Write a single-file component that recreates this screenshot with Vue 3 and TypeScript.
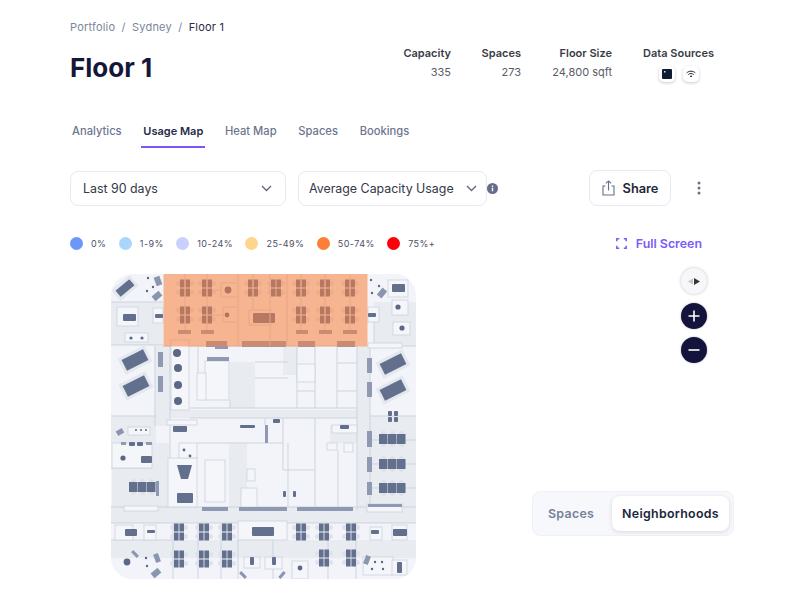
<script setup lang="ts">
type R = [number, number, number, number]
type Rot = [number, number, number, number, number]

const tabs = ['Analytics', 'Usage Map', 'Heat Map', 'Spaces', 'Bookings']
const stats = [
  { label: 'Capacity', value: '335' },
  { label: 'Spaces', value: '273' },
  { label: 'Floor Size', value: '24,800 sqft' },
]
const legend = [
  { label: '0%', color: '#6b96fb' },
  { label: '1-9%', color: '#a9d6fd' },
  { label: '10-24%', color: '#c9d0fb' },
  { label: '25-49%', color: '#fdd58b' },
  { label: '50-74%', color: '#fd7f36' },
  { label: '75%+', color: '#fb0007' },
]

// Darker floor zones
const rooms: R[] = [
  [111, 302, 52, 43], [155, 346, 16, 80], [357, 346, 13, 164], [160, 410, 197, 8],
  [152, 443, 17, 64], [111, 507, 305, 16], [111, 540, 305, 18], [230, 362, 25, 46],
  [374, 302, 42, 44], [370, 416, 46, 91], [112, 468, 46, 39], [283, 347, 14, 28],
  [111, 416, 45, 27], [330, 425, 27, 18], [229, 443, 18, 64],
]
// Light outlined boxes
const boxes: R[] = [
  [117, 307, 21, 19], [125, 333, 23, 9], [153, 308, 10, 15], [171, 340, 18, 70],
  [205, 361, 24, 39], [388, 280, 20, 17], [392, 300, 16, 15], [393, 322, 17, 13],
  [368, 307, 11, 15], [368, 343, 34, 5], [168, 458, 29, 49], [179, 443, 18, 15],
  [205, 460, 20, 42], [247, 469, 8, 12], [241, 488, 16, 19], [124, 506, 34, 5],
  [115, 525, 18, 15], [144, 525, 12, 15], [238, 521, 49, 19], [244, 557, 16, 11],
  [265, 557, 17, 12], [292, 561, 16, 18], [363, 557, 30, 18], [392, 560, 15, 15],
  [370, 527, 12, 13], [392, 525, 15, 15], [367, 504, 35, 8], [167, 420, 30, 5],
  [128, 427, 22, 8], [327, 443, 10, 7], [344, 443, 9, 9], [332, 425, 25, 8],
  [112, 443, 40, 25], [197, 373, 9, 27], [297, 364, 18, 18],
]
const walls: R[] = [
  [198, 347, 198, 373], [297, 347, 297, 408], [315, 347, 315, 408], [337, 347, 337, 408],
  [357, 346, 357, 510], [370, 346, 370, 510], [370, 346, 416, 346], [370, 416, 416, 416],
  [111, 507, 416, 507], [111, 523, 416, 523], [255, 362, 288, 362], [255, 378, 288, 378],
  [337, 363, 357, 363], [337, 391, 357, 391], [297, 391, 315, 391], [190, 408, 357, 408],
  [190, 418, 357, 418], [283, 418, 283, 470], [283, 470, 315, 470], [315, 418, 315, 507],
  [338, 450, 338, 507], [288, 443, 288, 507], [197, 443, 283, 443], [173, 523, 173, 579],
  [198, 523, 198, 579], [221, 523, 221, 579], [238, 540, 238, 579], [273, 540, 273, 579],
  [328, 540, 328, 579], [356, 523, 356, 579], [111, 302, 163, 302], [111, 345, 163, 345],
  [374, 322, 374, 346], [163, 346, 357, 346], [155, 346, 155, 426], [170, 346, 170, 507],
  [111, 416, 156, 416], [111, 468, 152, 468], [372, 440, 416, 440], [372, 464, 416, 464],
  [372, 488, 416, 488], [230, 400, 230, 408], [265, 418, 265, 425], [111, 540, 173, 540],
]
// Partitions inside the coloured zone
const orangeWalls: R[] = [
  [185, 274, 185, 330], [207, 274, 207, 330], [238, 274, 238, 346], [253, 274, 253, 310],
  [270, 274, 270, 346], [287, 274, 287, 346], [301, 274, 301, 330], [325, 274, 325, 330],
  [350, 274, 350, 330], [221, 283, 237, 283], [221, 297, 237, 297], [221, 283, 221, 297],
  [223, 307, 237, 307], [223, 322, 237, 322], [223, 307, 223, 322], [249, 310, 272, 310],
  [249, 325, 272, 325], [249, 310, 249, 325], [212, 290, 221, 290], [212, 315, 223, 315],
]
const doubleDesks: [number, number][] = [
  [185, 288], [207, 288], [253, 288], [276, 288], [301, 288], [325, 288], [350, 288],
  [185, 315], [207, 315], [301, 315], [325, 315], [350, 315],
  [179, 532], [204, 532], [227, 532], [301, 532], [324, 532], [351, 532],
  [179, 559], [204, 559], [227, 559], [324, 558], [351, 558],
]
const tripleDesks: [number, number][] = [[379, 434], [379, 459], [379, 483], [129, 482]]
const tables: Rot[] = [
  [135, 360, 24, 12, -27], [136, 386, 24, 12, -27], [393, 364, 24, 12, -27],
  [393, 390, 24, 12, -27], [125, 288, 18, 8, -40],
]
const softTilted: Rot[] = [
  [158, 281, 6, 9, -20], [157, 296, 9, 6, -40], [382, 293, 6, 9, 40], [120, 432, 7, 5, -30],
  [135, 554, 8, 3, 45], [157, 558, 9, 5, 70], [156, 573, 9, 6, -40], [243, 575, 8, 3, 45],
  [282, 575, 8, 3, -50], [367, 560, 9, 5, -70],
]
// Dark pieces of furniture
const darkTops: R[] = [
  [123, 314, 13, 7], [155, 314, 8, 4], [392, 284, 13, 8], [368, 313, 8, 4], [177, 493, 16, 10],
  [125, 529, 12, 7], [147, 530, 8, 3], [252, 527, 22, 9], [250, 557, 4, 8], [272, 557, 4, 8],
  [371, 530, 8, 4], [393, 529, 14, 7], [397, 562, 5, 11], [253, 313, 22, 10], [173, 426, 14, 6],
  [240, 425, 15, 3], [340, 425, 9, 4], [273, 419, 7, 4], [388, 411, 4, 5], [394, 411, 4, 5],
  [388, 417, 4, 5], [394, 417, 4, 5], [283, 491, 3, 6], [293, 491, 3, 6], [141, 456, 11, 7],
  [129, 442, 6, 4], [137, 442, 6, 4],
]
// Slate benches and long storage units
const bars: R[] = [
  [178, 330, 13, 4], [201, 330, 13, 4], [296, 330, 12, 4], [319, 330, 13, 4], [343, 330, 14, 4],
  [206, 341, 21, 6], [242, 341, 28, 6], [270, 341, 16, 6], [298, 341, 17, 6], [337, 341, 18, 6],
  [215, 346, 13, 3], [207, 357, 22, 4], [158, 352, 5, 15], [158, 376, 5, 16],
  [367, 358, 5, 15], [367, 382, 5, 15], [367, 431, 5, 16], [367, 457, 5, 15], [367, 482, 5, 13],
  [156, 481, 3, 15], [202, 507, 26, 4], [239, 507, 48, 4], [297, 507, 56, 4], [368, 504, 34, 3],
  [121, 442, 5, 3], [146, 442, 6, 3], [265, 425, 3, 18],
]
const dots: [number, number, number][] = [
  [177, 353, 4], [178, 368, 4], [178, 385, 4], [178, 401, 4], [228, 290, 3.4], [227, 315, 2.4],
  [398, 307, 2.6], [402, 328, 2.6], [131, 338, 1.6], [142, 338, 1.6], [123, 458, 2.6],
  [127, 562, 3.4], [300, 568, 2.4], [148, 278, 1.2], [147, 291, 1.2], [153, 287, 1.2],
  [371, 280, 1.2], [379, 286, 1.2], [372, 293, 1.2], [184, 450, 1.4], [190, 456, 1.4],
  [146, 558, 1.2], [147, 566, 1.2], [375, 562, 1.2], [382, 562, 1.2], [372, 569, 1.2],
  [383, 569, 1.2], [136, 430, 1], [141, 430, 1], [146, 430, 1],
]
const chairs = (x: number, y: number): [number, number][] => [
  [x - 6.5, y - 4.5], [x - 6.5, y + 4.5], [x + 6.5, y - 4.5], [x + 6.5, y + 4.5],
]
const chairList = doubleDesks.flatMap(([x, y]) => chairs(x, y))
</script>

<template>
  <div class="page">
    <nav class="crumbs">
      <span>Portfolio</span><i>/</i><span>Sydney</span><i>/</i><b>Floor 1</b>
    </nav>

    <header class="head">
      <h1>Floor 1</h1>
      <div class="stats">
        <div v-for="s in stats" :key="s.label" class="stat">
          <strong>{{ s.label }}</strong>
          <span>{{ s.value }}</span>
        </div>
        <div class="stat sources">
          <strong>Data Sources</strong>
          <div class="source-icons">
            <span class="source">
              <svg width="10" height="10" viewBox="0 0 10 10">
                <rect width="10" height="10" rx="1" fill="#0f1c33" />
                <rect x="2" y="2" width="1.5" height="1.5" fill="#dfe6f2" />
              </svg>
            </span>
            <span class="source">
              <svg width="10" height="8" viewBox="0 0 10 8" fill="none" stroke="#222a3a" stroke-width="1" stroke-linecap="round">
                <path d="M1 2.6C3.4 .6 6.6 .6 9 2.6" />
                <path d="M2.6 4.3C4 3.2 6 3.2 7.4 4.3" />
                <circle cx="5" cy="6.3" r=".5" fill="#222a3a" />
              </svg>
            </span>
          </div>
        </div>
      </div>
    </header>

    <div class="tabs">
      <a v-for="t in tabs" :key="t" :class="{ active: t === 'Usage Map' }">{{ t }}</a>
    </div>

    <div class="controls">
      <div class="select first">
        <span>Last 90 days</span>
        <svg width="11" height="7" viewBox="0 0 11 7" fill="none" stroke="#5d6679" stroke-width="1.3"><path d="M1 1l4.5 4.5L10 1" /></svg>
      </div>
      <div class="select second">
        <span>Average Capacity Usage</span>
        <svg width="11" height="7" viewBox="0 0 11 7" fill="none" stroke="#5d6679" stroke-width="1.3"><path d="M1 1l4.5 4.5L10 1" /></svg>
      </div>
      <svg class="info" width="11" height="11" viewBox="0 0 11 11">
        <circle cx="5.5" cy="5.5" r="5.5" fill="#656e86" />
        <rect x="4.8" y="4.7" width="1.4" height="3.6" fill="#fff" />
        <rect x="4.8" y="2.5" width="1.4" height="1.4" fill="#fff" />
      </svg>
      <button class="share">
        <svg width="13" height="16" viewBox="0 0 13 16" fill="none" stroke="#667089" stroke-width="1.1">
          <path d="M3.5 6H1v9h11V6H9.5" />
          <path d="M6.5 10.5V1M3.8 3.4L6.5 .9l2.7 2.5" />
        </svg>
        <span>Share</span>
      </button>
      <svg class="kebab" width="4" height="14" viewBox="0 0 4 14" fill="#6a7284">
        <circle cx="2" cy="2" r="1.5" /><circle cx="2" cy="7" r="1.5" /><circle cx="2" cy="12" r="1.5" />
      </svg>
    </div>

    <div class="legend-row">
      <div class="legend">
        <div v-for="l in legend" :key="l.label" class="legend-item">
          <span class="dot" :style="{ background: l.color }"></span>
          <span>{{ l.label }}</span>
        </div>
      </div>
      <a class="fullscreen">
        <svg width="11" height="11" viewBox="0 0 11 11" fill="none" stroke="#7b5cf8" stroke-width="1.5">
          <path d="M.8 3.2V.8h2.4M7.8 .8h2.4v2.4M10.2 7.8v2.4H7.8M3.2 10.2H.8V7.8" />
        </svg>
        <span>Full Screen</span>
      </a>
    </div>

    <section class="stage">
      <svg class="map" width="306" height="306" viewBox="110 274 306 306">
        <defs>
          <clipPath id="mapClip"><rect x="111" y="274" width="305" height="305" rx="21" /></clipPath>
          <filter id="soft" x="-5%" y="-5%" width="110%" height="110%"><feGaussianBlur stdDeviation=".5" /></filter>
        </defs>
        <g clip-path="url(#mapClip)">
          <g filter="url(#soft)">
            <rect x="100" y="264" width="326" height="326" fill="#f2f4f9" />
            <rect v-for="(r, i) in rooms" :key="'room' + i" :x="r[0]" :y="r[1]" :width="r[2]" :height="r[3]" fill="#e8ebf0" />
            <line v-for="(w, i) in walls" :key="'wall' + i" :x1="w[0]" :y1="w[1]" :x2="w[2]" :y2="w[3]" stroke="#cdd3de" stroke-width="1" />
            <rect v-for="(r, i) in boxes" :key="'box' + i" :x="r[0]" :y="r[1]" :width="r[2]" :height="r[3]" fill="#f4f6fa" stroke="#d0d5e0" stroke-width=".9" />
            <circle v-for="(c, i) in chairList" :key="'chair' + i" :cx="c[0]" :cy="c[1]" r="2.4" fill="#dde1ea" />
            <g v-for="(d, i) in doubleDesks" :key="'dd' + i" fill="#626f8e">
              <rect :x="d[0] - 5" :y="d[1] - 8.5" width="4.6" height="8" />
              <rect :x="d[0] + .4" :y="d[1] - 8.5" width="4.6" height="8" />
              <rect :x="d[0] - 5" :y="d[1] + .5" width="4.6" height="8" />
              <rect :x="d[0] + .4" :y="d[1] + .5" width="4.6" height="8" />
            </g>
            <g v-for="(d, i) in tripleDesks" :key="'td' + i" fill="#626f8e">
              <circle v-for="n in 3" :key="n" :cx="d[0] + 4.5 + (n - 1) * 9" :cy="d[1] - .5" r="2.4" fill="#dde1ea" />
              <circle v-for="n in 3" :key="'b' + n" :cx="d[0] + 4.5 + (n - 1) * 9" :cy="d[1] + 10.5" r="2.4" fill="#dde1ea" />
              <rect :x="d[0]" :y="d[1]" width="8.5" height="10" />
              <rect :x="d[0] + 9" :y="d[1]" width="8.5" height="10" />
              <rect :x="d[0] + 18" :y="d[1]" width="8.5" height="10" />
            </g>
            <g v-for="(t, i) in tables" :key="'table' + i" :transform="`rotate(${t[4]} ${t[0]} ${t[1]})`">
              <rect :x="t[0] - t[2] / 2 - 3" :y="t[1] - t[3] / 2 - 3" :width="t[2] + 6" :height="t[3] + 6" fill="#e3e7ee" />
              <rect :x="t[0] - t[2] / 2" :y="t[1] - t[3] / 2" :width="t[2]" :height="t[3]" fill="#626f8e" />
            </g>
            <rect v-for="(t, i) in softTilted" :key="'tilt' + i" :x="t[0] - t[2] / 2" :y="t[1] - t[3] / 2" :width="t[2]" :height="t[3]" :transform="`rotate(${t[4]} ${t[0]} ${t[1]})`" fill="#8a96af" />
            <path d="M177 465h15l-4 14h-7z" fill="#626f8e" />
            <rect v-for="(b, i) in darkTops" :key="'top' + i" :x="b[0]" :y="b[1]" :width="b[2]" :height="b[3]" rx="1" fill="#626f8e" />
            <rect v-for="(b, i) in bars" :key="'bar' + i" :x="b[0]" :y="b[1]" :width="b[2]" :height="b[3]" fill="#8f9ab2" />
            <circle v-for="(c, i) in dots" :key="'dot' + i" :cx="c[0]" :cy="c[1]" :r="c[2]" fill="#5a6785" />
            <line v-for="(w, i) in orangeWalls" :key="'ow' + i" :x1="w[0]" :y1="w[1]" :x2="w[2]" :y2="w[3]" stroke="#ced4df" stroke-width="1" />
          </g>
          <rect x="163.5" y="274" width="204" height="72.5" fill="#fc7f3c" fill-opacity=".55" />
        </g>
      </svg>

      <div class="zoom">
        <button class="compass">
          <svg width="14" height="7" viewBox="0 0 14 7">
            <path d="M6 .5L1 3.5l5 3z" fill="#c2c4c9" />
            <path d="M7 0l6 3.5L7 7z" fill="#33343a" />
          </svg>
        </button>
        <button class="round">
          <svg width="12" height="12" viewBox="0 0 12 12" stroke="#fff" stroke-width="1.6"><path d="M6 .5v11M.5 6h11" /></svg>
        </button>
        <button class="round">
          <svg width="12" height="12" viewBox="0 0 12 12" stroke="#fff" stroke-width="1.6"><path d="M.5 6h11" /></svg>
        </button>
      </div>

      <div class="segment">
        <span>Spaces</span>
        <span class="on">Neighborhoods</span>
      </div>
    </section>
  </div>
</template>

<style>
html, body { background: #fff; }
</style>

<style scoped>
.page {
  width: 794px;
  height: 594px;
  box-sizing: border-box;
  padding: 20px 0 0 70px;
  font-family: Inter, "Liberation Sans", sans-serif;
  overflow: hidden;
  position: relative;
}
.crumbs {
  display: flex;
  gap: 6.3px;
  font-size: 11px;
  line-height: 15px;
  letter-spacing: .2px;
  color: #7c859c;
}
.crumbs i { font-style: normal; }
.crumbs b { font-weight: 400; color: #272b44; }
.head {
  display: flex;
  justify-content: space-between;
  width: 644px;
  height: 86px;
  padding-top: 11px;
  box-sizing: border-box;
}
h1 {
  margin: 5px 0 0;
  font-size: 26px;
  line-height: 34px;
  font-weight: 700;
  color: #14163a;
}
.stats { display: flex; }
.stat {
  display: flex;
  flex-direction: column;
  align-items: flex-end;
  gap: 5px;
}
.stat:nth-child(1) { width: 48px; }
.stat:nth-child(2) { width: 70px; }
.stat:nth-child(3) { width: 91px; }
.stat strong {
  font-size: 11px;
  line-height: 14px;
  font-weight: 600;
  color: #3a3d47;
  white-space: nowrap;
}
.stat span {
  font-size: 11px;
  line-height: 14px;
  color: #595c66;
  white-space: nowrap;
}
.sources { margin-left: 31px; align-items: center; width: 71px; }
.source-icons { display: flex; gap: 8px; margin-top: 1px; }
.source {
  width: 16px;
  height: 16px;
  border-radius: 5px;
  background: #fff;
  box-shadow: 0 1px 3px rgba(30, 40, 70, .25);
  display: flex;
  align-items: center;
  justify-content: center;
}
.tabs {
  display: flex;
  gap: 21.7px;
  height: 38px;
  padding-left: 2px;
  margin-top: 1px;
  box-sizing: border-box;
}
.tabs a {
  font-size: 11.2px;
  line-height: 15px;
  font-weight: 500;
  color: #6d7690;
  padding-top: 2px;
  height: 26px;
}
.tabs a.active {
  font-size: 11px;
  color: #262a48;
  font-weight: 600;
  border-bottom: 2px solid #7c55f7;
  box-sizing: border-box;
  padding: 2px 2px 0;
  margin: 0 -2px;
}
.controls {
  display: flex;
  align-items: center;
  height: 36px;
  margin-top: 10px;
}
.select {
  box-sizing: border-box;
  height: 35px;
  border: 1px solid #e8eaf0;
  border-radius: 8px;
  display: flex;
  align-items: center;
  justify-content: space-between;
  font-size: 12.4px;
  color: #333848;
}
.first { width: 216px; padding: 0 13px 0 12px; }
.second { width: 189px; margin-left: 12px; padding: 0 9px 0 10px; }
.share {
  margin-left: 91px;
  width: 82px;
  height: 36px;
  box-sizing: border-box;
  border: 1px solid #e8eaf0;
  border-radius: 8px;
  background: #fff;
  display: flex;
  align-items: center;
  justify-content: center;
  gap: 8px;
  font-family: inherit;
  font-size: 12.8px;
  font-weight: 600;
  color: #232838;
  padding: 0;
}
.kebab { margin-left: 26px; }
.legend-row {
  display: flex;
  align-items: center;
  width: 632px;
  justify-content: space-between;
  height: 14px;
  margin-top: 30px;
}
.legend { display: flex; gap: 12.5px; }
.legend-item {
  display: flex;
  align-items: center;
  gap: 8px;
  font-size: 9px;
  letter-spacing: .42px;
  color: #4b5066;
}
.dot { width: 13px; height: 13px; border-radius: 50%; }
.fullscreen {
  display: flex;
  align-items: center;
  gap: 9px;
  font-size: 12.4px;
  font-weight: 600;
  color: #7b5cf8;
}
.stage {
  position: relative;
  margin-top: 24px;
  height: 320px;
}
.map { display: block; margin-left: 40px; }
.zoom {
  position: absolute;
  left: 611px;
  top: -6px;
  display: flex;
  flex-direction: column;
  gap: 8.5px;
}
.zoom button {
  width: 26px;
  height: 26px;
  border: 0;
  border-radius: 50%;
  padding: 0;
  display: flex;
  align-items: center;
  justify-content: center;
}
.zoom .compass { background: #f7f7f9; box-shadow: 0 0 3px rgba(30, 40, 70, .3); }
.zoom .round { background: #13133c; box-shadow: 0 0 2px rgba(30, 40, 70, .4); }
.segment {
  position: absolute;
  left: 462px;
  top: 217px;
  width: 202px;
  height: 45px;
  box-sizing: border-box;
  border: 1px solid #f0f1f5;
  background: #f7f8fb;
  border-radius: 8px;
  display: flex;
  align-items: center;
  font-size: 12.4px;
  font-weight: 600;
  letter-spacing: .3px;
  color: #78819a;
  padding-left: 15px;
}
.segment .on {
  margin-left: auto;
  margin-right: 4px;
  width: 117px;
  height: 35px;
  border-radius: 8px;
  background: #fff;
  color: #20253a;
  box-shadow: 0 1px 4px rgba(30, 40, 70, .15);
  display: flex;
  align-items: center;
  justify-content: center;
}
</style>
